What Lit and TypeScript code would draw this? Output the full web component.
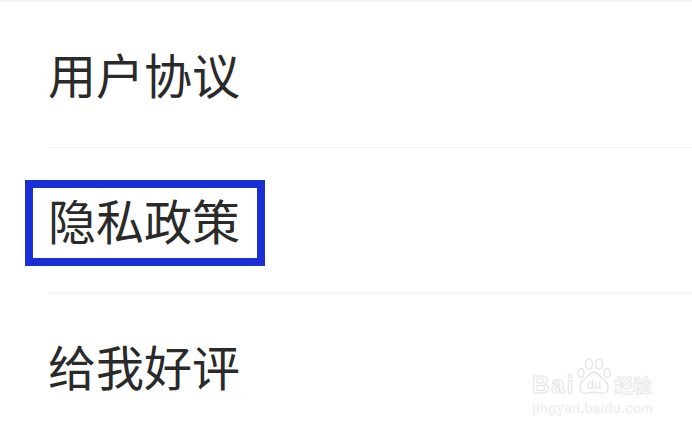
import { LitElement, html, css } from "lit";
import { customElement } from "lit/decorators.js";

@customElement("app-root")
export class AppRoot extends LitElement {
  static styles = css`
    :host {
      display: block;
      position: relative;
      width: 692px;
      height: 432px;
      overflow: hidden;
      background: #fff;
      font-family: "Noto Sans CJK SC", "Liberation Sans", sans-serif;
    }
    .top { height: 2px; background: #f2f2f2; }
    .list { padding-left: 48px; }
    .row {
      height: 145px;
      display: flex;
      align-items: center;
      border-bottom: 1px solid #f3f3f3;
      font-size: 48px;
      line-height: 1;
      color: #2a2a2a;
    }
    .row span { position: relative; top: -2px; }
    .row:last-child { border-bottom: none; }
    .box {
      position: absolute;
      left: 25px;
      top: 180px;
      width: 240px;
      height: 86px;
      box-sizing: border-box;
      border: 8px solid #1a2ed6;
    }
    .mark {
      position: absolute;
      left: 532px;
      top: 358px;
      width: 124px;
      height: 56px;
      color: #fff;
      font-family: "Liberation Sans", sans-serif;
    }
    .brand {
      display: flex;
      align-items: flex-end;
      height: 37px;
    }
    .bai {
      font-size: 24px;
      font-weight: 700;
      line-height: 20px;
      letter-spacing: 2px;
      -webkit-text-stroke: 1px #e4e4e4;
      width: 45px;
      flex: none;
    }
    .paw { width: 34px; height: 37px; flex: none; }
    .jy {
      font-size: 19px;
      line-height: 20px;
      font-family: "Noto Sans CJK SC", sans-serif;
      font-weight: 700;
      margin-left: 3px;
      white-space: nowrap;
      -webkit-text-stroke: 0.7px #e4e4e4;
    }
    .url {
      font-size: 14px;
      line-height: 14px;
      margin-top: 6px;
      letter-spacing: -0.1px;
      white-space: nowrap;
      color: #f0f0f0;
      font-weight: 700;
    }
  `;

  render() {
    return html`
      <div class="top"></div>
      <div class="list">
        <div class="row"><span>用户协议</span></div>
        <div class="row"><span>隐私政策</span></div>
        <div class="row"><span>给我好评</span></div>
      </div>
      <div class="box"></div>
      <div class="mark">
        <div class="brand">
          <span class="bai">Bai</span>
          <svg class="paw" viewBox="0 0 34 37" fill="none" stroke="#e4e4e4" stroke-width="1.5">
            <ellipse cx="4" cy="15" rx="3" ry="4.5"></ellipse>
            <ellipse cx="12" cy="6" rx="3.5" ry="5"></ellipse>
            <ellipse cx="22" cy="6" rx="3.5" ry="5"></ellipse>
            <ellipse cx="30" cy="15" rx="3" ry="4.5"></ellipse>
            <path d="M17 14c-4 0-5 4-9 7-4 3-6 6-5 10 1 4 5 5 9 4 3-1 7-1 10 0 4 1 8 0 9-4 1-4-1-7-5-10-4-3-5-7-9-7z"></path>
            <text x="17" y="31" text-anchor="middle" font-size="13" font-family="Liberation Sans" fill="#e4e4e4" stroke="none">du</text>
          </svg>
          <span class="jy">经验</span>
        </div>
        <div class="url">jingyan.baidu.com</div>
      </div>
    `;
  }
}
